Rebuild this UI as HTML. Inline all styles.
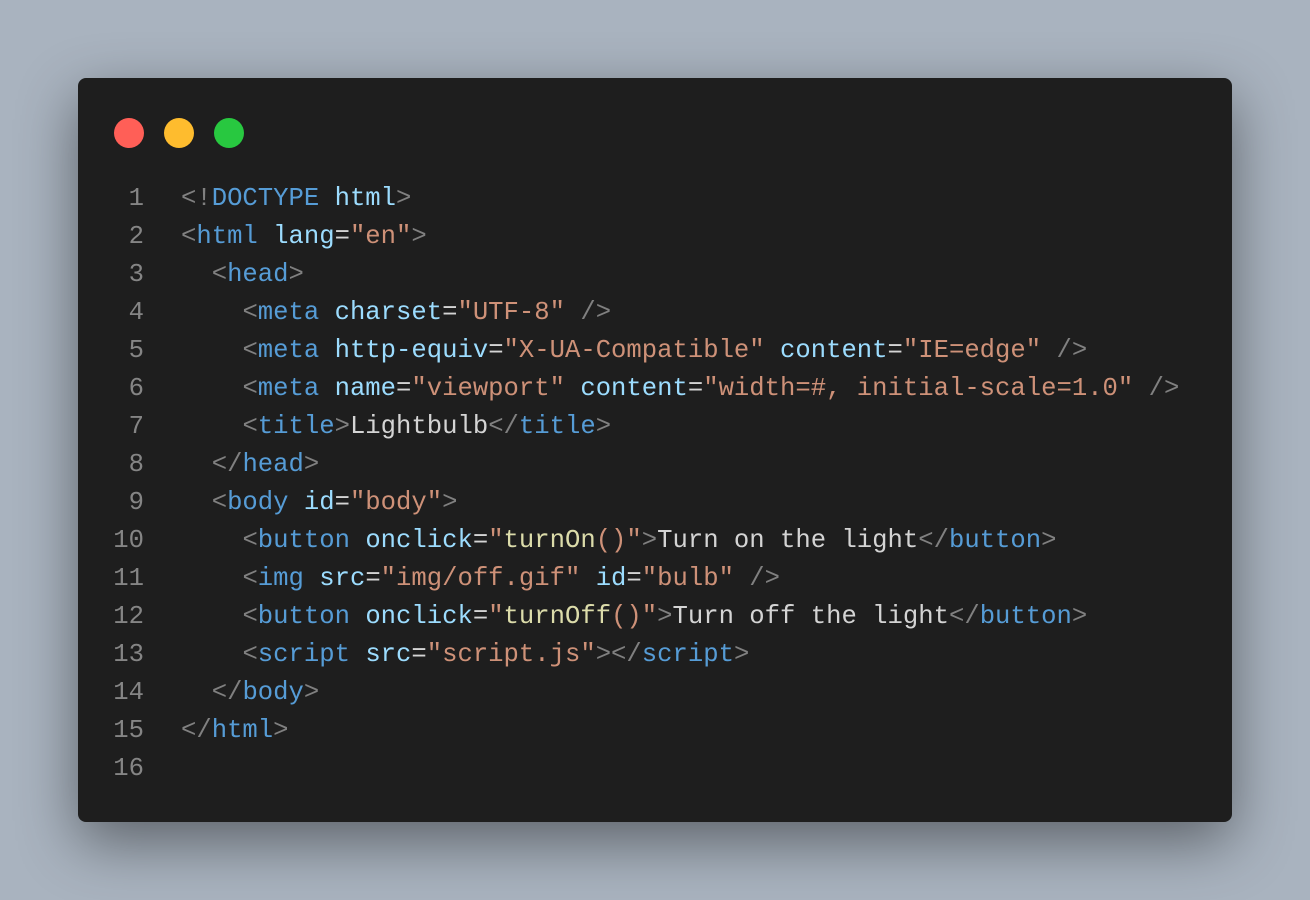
<!DOCTYPE html>
<html><head><style>
html,body{margin:0;padding:0;}
body{width:1310px;height:900px;background:#a9b3bf;position:relative;overflow:hidden;font-family:"Liberation Mono",monospace;}
.win{position:absolute;left:78px;top:78px;width:1154px;height:744px;background:#1e1e1e;border-radius:8px;box-shadow:0 20px 60px rgba(0,0,0,0.45);}
.dot{position:absolute;top:40px;width:30px;height:30px;border-radius:50%;}
.code{position:absolute;left:0;top:102px;font-size:25.6px;line-height:38px;white-space:pre;color:#d4d4d4;}
.ln{display:inline-block;width:66px;text-align:right;color:#858585;margin-right:37px;}
.p{color:#808080}.t{color:#569cd6}.a{color:#9cdcfe}.s{color:#ce9178}.f{color:#dcdcaa}
</style></head><body>
<div class="win">
<div class="dot" style="left:36px;background:#ff5f57"></div>
<div class="dot" style="left:86px;background:#febc2e"></div>
<div class="dot" style="left:136px;background:#28c840"></div>
<div class="code"><div><span class="ln">1</span><span class="p">&lt;!</span><span class="t">DOCTYPE</span> <span class="a">html</span><span class="p">&gt;</span></div><div><span class="ln">2</span><span class="p">&lt;</span><span class="t">html</span> <span class="a">lang</span>=<span class="s">"en"</span><span class="p">&gt;</span></div><div><span class="ln">3</span>  <span class="p">&lt;</span><span class="t">head</span><span class="p">&gt;</span></div><div><span class="ln">4</span>    <span class="p">&lt;</span><span class="t">meta</span> <span class="a">charset</span>=<span class="s">"UTF-8"</span> <span class="p">/&gt;</span></div><div><span class="ln">5</span>    <span class="p">&lt;</span><span class="t">meta</span> <span class="a">http-equiv</span>=<span class="s">"X-UA-Compatible"</span> <span class="a">content</span>=<span class="s">"IE=edge"</span> <span class="p">/&gt;</span></div><div><span class="ln">6</span>    <span class="p">&lt;</span><span class="t">meta</span> <span class="a">name</span>=<span class="s">"viewport"</span> <span class="a">content</span>=<span class="s">"width=#, initial-scale=1.0"</span> <span class="p">/&gt;</span></div><div><span class="ln">7</span>    <span class="p">&lt;</span><span class="t">title</span><span class="p">&gt;</span>Lightbulb<span class="p">&lt;/</span><span class="t">title</span><span class="p">&gt;</span></div><div><span class="ln">8</span>  <span class="p">&lt;/</span><span class="t">head</span><span class="p">&gt;</span></div><div><span class="ln">9</span>  <span class="p">&lt;</span><span class="t">body</span> <span class="a">id</span>=<span class="s">"body"</span><span class="p">&gt;</span></div><div><span class="ln">10</span>    <span class="p">&lt;</span><span class="t">button</span> <span class="a">onclick</span>=<span class="s">"</span><span class="f">turnOn</span><span class="s">()"</span><span class="p">&gt;</span>Turn on the light<span class="p">&lt;/</span><span class="t">button</span><span class="p">&gt;</span></div><div><span class="ln">11</span>    <span class="p">&lt;</span><span class="t">img</span> <span class="a">src</span>=<span class="s">"img/off.gif"</span> <span class="a">id</span>=<span class="s">"bulb"</span> <span class="p">/&gt;</span></div><div><span class="ln">12</span>    <span class="p">&lt;</span><span class="t">button</span> <span class="a">onclick</span>=<span class="s">"</span><span class="f">turnOff</span><span class="s">()"</span><span class="p">&gt;</span>Turn off the light<span class="p">&lt;/</span><span class="t">button</span><span class="p">&gt;</span></div><div><span class="ln">13</span>    <span class="p">&lt;</span><span class="t">script</span> <span class="a">src</span>=<span class="s">"script.js"</span><span class="p">&gt;&lt;/</span><span class="t">script</span><span class="p">&gt;</span></div><div><span class="ln">14</span>  <span class="p">&lt;/</span><span class="t">body</span><span class="p">&gt;</span></div><div><span class="ln">15</span><span class="p">&lt;/</span><span class="t">html</span><span class="p">&gt;</span></div><div><span class="ln">16</span></div></div>
</div>
</body></html>
